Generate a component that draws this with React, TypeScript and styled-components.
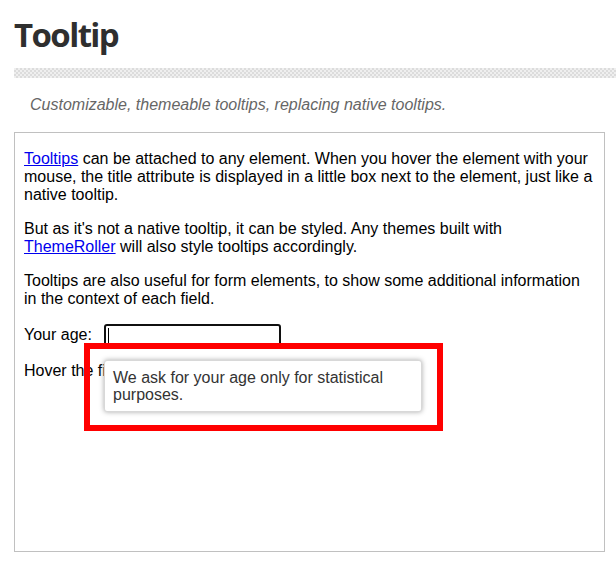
import styled, { createGlobalStyle } from "styled-components";

const GlobalStyle = createGlobalStyle`
  html, body {
    margin: 0;
    padding: 0;
    background: #fff;
  }
  body {
    font-family: "Liberation Sans", Arial, sans-serif;
    overflow: hidden;
  }
`;

const Page = styled.div`
  padding-left: 14px;
  width: 616px;
  box-sizing: border-box;
`;

const Title = styled.h1`
  margin: 15px 0 0;
  font-family: "Open Sans", "Liberation Sans", sans-serif;
  font-weight: 700;
  font-size: 33px;
  line-height: 40px;
  letter-spacing: -1.6px;
  color: #2f2f2f;
`;

const Stripe = styled.div`
  margin-top: 13px;
  height: 10px;
  background: repeating-conic-gradient(#dcdcdc 0 25%, #efefef 0 50%) 0 0 / 4px 4px;
`;

const Subtitle = styled.p`
  margin: 18px 0 0;
  padding-left: 16px;
  font-style: italic;
  font-size: 16px;
  line-height: 18px;
  color: #666;
`;

const DemoBox = styled.div`
  position: relative;
  margin-top: 18px;
  width: 591px;
  height: 420px;
  box-sizing: border-box;
  border: 1px solid #c0c0c0;
  padding: 1px 9px 0;
  font-size: 16px;
  line-height: 18px;
  color: #000;
`;

const Para = styled.p`
  margin: 16px 0;
`;

const Link = styled.a`
  color: #0000ee;
  text-decoration: underline;
`;

const Field = styled.div`
  display: flex;
  align-items: center;
  gap: 12px;
  margin: 14px 0 16px;
`;

const AgeInput = styled.input`
  width: 177px;
  height: 22px;
  box-sizing: border-box;
  border: 2px solid #101010;
  border-radius: 3px;
  outline: none;
  padding: 1px 3px;
  font: 16px "Liberation Sans", Arial, sans-serif;
  background: linear-gradient(#000, #000) 2px 2px / 1px 15px no-repeat, #fff;
`;

const Tooltip = styled.div`
  position: absolute;
  left: 89px;
  top: 227px;
  max-width: 300px;
  padding: 8px;
  background: #fff;
  border: 1px solid #d8d8d8;
  border-radius: 3px;
  box-shadow: 0 0 5px #aaa;
  color: #333;
  font-size: 16px;
  line-height: 17px;
`;

const Highlight = styled.div`
  position: absolute;
  left: 69px;
  top: 210px;
  width: 359px;
  height: 88px;
  box-sizing: border-box;
  border: 6px solid #ff0000;
  pointer-events: none;
`;

export default function App() {
  return (
    <>
      <GlobalStyle />
      <Page>
        <Title>Tooltip</Title>
        <Stripe />
        <Subtitle>Customizable, themeable tooltips, replacing native tooltips.</Subtitle>
        <DemoBox>
          <Para>
            <Link href="#">Tooltips</Link> can be attached to any element. When you hover the
            element with your mouse, the title attribute is displayed in a little box next to the
            element, just like a native tooltip.
          </Para>
          <Para>
            But as it's not a native tooltip, it can be styled. Any themes built with{" "}
            <Link href="#">ThemeRoller</Link> will also style tooltips accordingly.
          </Para>
          <Para>
            Tooltips are also useful for form elements, to show some additional information in the
            context of each field.
          </Para>
          <Field>
            <label htmlFor="age">Your age:</label>
            <AgeInput id="age" />
          </Field>
          <Para>Hover the field to see the tooltip.</Para>
          <Tooltip>We ask for your age only for statistical purposes.</Tooltip>
          <Highlight />
        </DemoBox>
      </Page>
    </>
  );
}
